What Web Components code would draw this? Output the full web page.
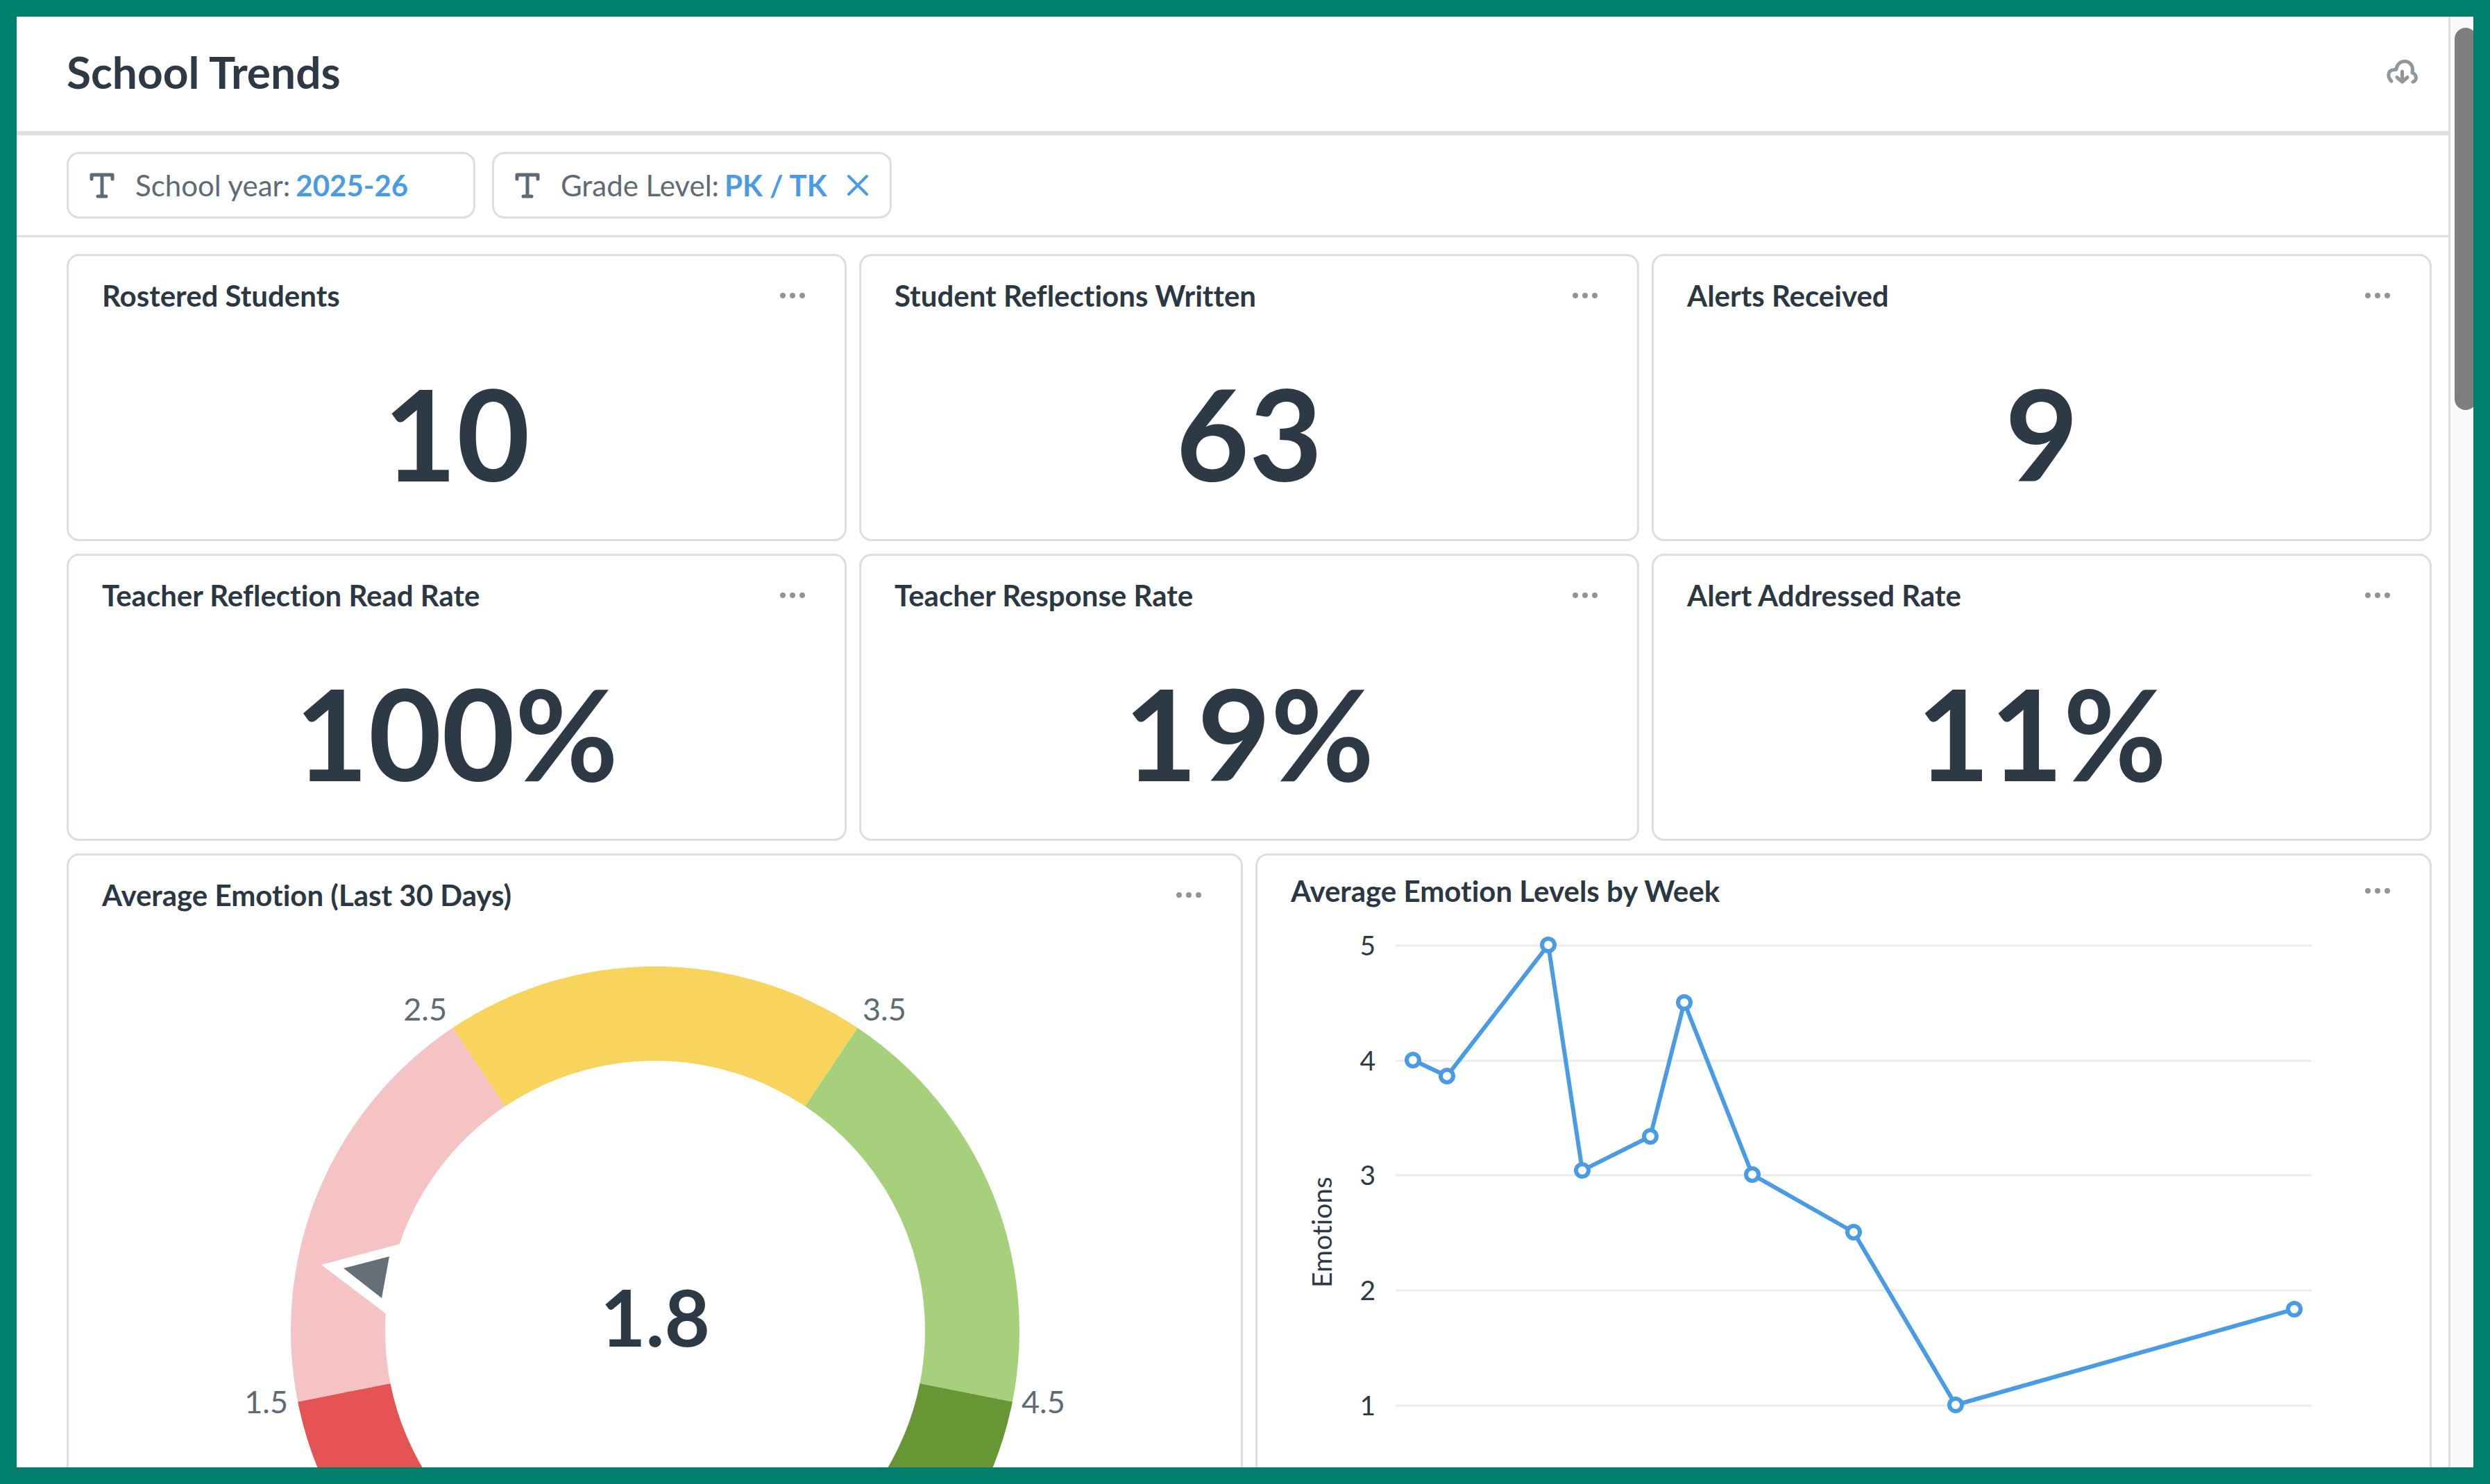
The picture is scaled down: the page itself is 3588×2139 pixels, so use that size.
<!DOCTYPE html>
<html lang="en">
<head>
<meta charset="utf-8">
<title>School Trends</title>
<style>
  body { margin: 0; font-family: Lato, "Liberation Sans", sans-serif; font-variant-ligatures: none; color: #2d3a45; background: #fff; }
</style>
</head>
<body>
<dashboard-frame>
  <dashboard-header slot="header" heading="School Trends"></dashboard-header>
  <filter-bar slot="filters">
    <filter-chip label="School year:" value="2025-26"></filter-chip>
    <filter-chip label="Grade Level:" value="PK / TK" clearable></filter-chip>
  </filter-bar>
  <card-grid columns="3">
    <dash-card heading="Rostered Students"><stat-number>10</stat-number></dash-card>
    <dash-card heading="Student Reflections Written"><stat-number>63</stat-number></dash-card>
    <dash-card heading="Alerts Received"><stat-number>9</stat-number></dash-card>
    <dash-card heading="Teacher Reflection Read Rate"><stat-number>100%</stat-number></dash-card>
    <dash-card heading="Teacher Response Rate"><stat-number>19%</stat-number></dash-card>
    <dash-card heading="Alert Addressed Rate"><stat-number>11%</stat-number></dash-card>
  </card-grid>
  <card-grid columns="2">
    <dash-card heading="Average Emotion (Last 30 Days)"><gauge-chart></gauge-chart></dash-card>
    <dash-card heading="Average Emotion Levels by Week" compact><line-chart></line-chart></dash-card>
  </card-grid>
</dashboard-frame>

<script>
const define = (name, html, setup) => {
  const template = document.createElement('template');
  template.innerHTML = html;
  customElements.define(name, class extends HTMLElement {
    connectedCallback() {
      if (this.shadowRoot) return;
      const root = this.attachShadow({ mode: 'open' });
      root.append(template.content.cloneNode(true));
      if (setup) setup(this, root);
    }
  });
};

define('dashboard-frame', `
  <style>
    :host { display: block; position: relative; box-sizing: border-box; height: 100vh; border: 24px solid #00806c; overflow: hidden; background: #fff; }
    .cards { display: flex; flex-direction: column; gap: 18px; padding: 24px 60px 24px 72px; }
    .track { position: absolute; top: 0; right: 0; bottom: 0; width: 33px; border-left: 3px solid #dcdedf; background: rgba(249, 249, 249, .88); overflow: hidden; }
    .thumb { width: 32px; height: 551px; margin: 16px 0 0 6px; border-radius: 16px; background: rgba(122, 122, 122, .97); }
  </style>
  <slot name="header"></slot>
  <slot name="filters"></slot>
  <main class="cards"><slot></slot></main>
  <div class="track" aria-hidden="true"><div class="thumb"></div></div>
`);

define('dashboard-header', `
  <style>
    :host { display: flex; align-items: center; justify-content: space-between; box-sizing: border-box; height: 171px; padding: 0 76px 6px 72px; border-bottom: 6px solid #dcdedf; }
    h1 { margin: 0; font-size: 64px; line-height: 78px; font-weight: 700; }
    button { display: block; padding: 0; border: 0; background: none; color: #8f979c; }
    svg { display: block; }
  </style>
  <h1></h1>
  <button type="button" aria-label="Download">
    <svg width="52" height="42" viewBox="0 0 52 42" fill="none" stroke="currentColor" stroke-width="5" stroke-linecap="round" stroke-linejoin="round">
      <path d="M10 34C4 28 4 18 14 17.500L17 17C18 9 23 5.500 29 5.500C37 5.500 42 12 40 22C46 24 48 32 41 35"/>
      <path d="M25.500 20V34M18 28.500L25.500 35L33 28.500"/>
    </svg>
  </button>
`, (el, root) => { root.querySelector('h1').textContent = el.getAttribute('heading'); });

define('filter-bar', `
  <style>
    :host { display: flex; gap: 24px; padding: 24px 72px; border-bottom: 3px solid #dcdedf; }
  </style>
  <slot></slot>
`);

define('filter-chip', `
  <style>
    :host { display: block; }
    .chip { display: flex; align-items: center; box-sizing: border-box; height: 96px; min-width: 589px; padding: 0 30px; border: 3px solid #dcdfdf; border-radius: 18px; font-size: 42px; line-height: 54px; color: #5f6b74; white-space: nowrap; }
    :host([clearable]) .chip { min-width: 0; }
    .label { display: flex; align-items: center; padding: 0; border: 0; background: none; font: inherit; color: inherit; }
    .type { display: block; margin-right: 30px; }
    strong { margin-left: 8px; font-weight: 700; color: #4a9be6; }
    .clear { display: none; margin-left: 28px; padding: 0; border: 0; background: none; color: #4a9be6; }
    :host([clearable]) .clear { display: block; }
    .clear svg { display: block; }
  </style>
  <div class="chip">
    <button class="label" type="button">
      <svg class="type" width="36" height="38" viewBox="0 0 36 38" fill="none" stroke="currentColor" stroke-width="5" stroke-linejoin="round" stroke-linecap="round">
        <path d="M3 10V4H33V10M18 4V35M12 35H24"/>
      </svg>
      <span></span><strong></strong>
    </button>
    <button class="clear" type="button" aria-label="Clear filter">
      <svg width="32" height="32" viewBox="0 0 32 32" stroke="currentColor" stroke-width="4" stroke-linecap="round"><path d="M3 3L29 29M29 3L3 29"/></svg>
    </button>
  </div>
`, (el, root) => {
  root.querySelector('span').textContent = el.getAttribute('label');
  root.querySelector('strong').textContent = el.getAttribute('value');
});

define('card-grid', `
  <style>
    :host { display: grid; gap: 18px; }
    :host([columns="3"]) { grid-template-columns: repeat(3, minmax(0, 1fr)); grid-auto-rows: 414px; }
    :host([columns="2"]) { grid-template-columns: repeat(2, minmax(0, 1fr)); }
  </style>
  <slot></slot>
`);

define('dash-card', `
  <style>
    :host { display: flex; flex-direction: column; box-sizing: border-box; border: 3px solid #dcdfdf; border-radius: 18px; padding-top: 30px; background: #fff; }
    :host([compact]) { padding-top: 24px; }
    header { display: flex; align-items: center; justify-content: space-between; padding: 0 54px 0 48px; }
    h2 { margin: 0; font-size: 42px; line-height: 54px; font-weight: 700; color: #2b3843; white-space: nowrap; }
    button { display: block; padding: 0; border: 0; background: none; color: #8f979c; }
    svg { display: block; }
    .body { flex: 1; display: flex; flex-direction: column; }
  </style>
  <header>
    <h2></h2>
    <button type="button" aria-label="More options">
      <svg width="42" height="12" viewBox="0 0 42 12" fill="currentColor"><circle cx="7" cy="6" r="4"/><circle cx="21" cy="6" r="4"/><circle cx="35" cy="6" r="4"/></svg>
    </button>
  </header>
  <div class="body"><slot></slot></div>
`, (el, root) => { root.querySelector('h2').textContent = el.getAttribute('heading'); });

define('stat-number', `
  <style>
    :host { display: flex; flex: 1; align-items: center; justify-content: center; padding-top: 18px; font-size: 182px; line-height: 220px; font-weight: 700; }
  </style>
  <slot></slot>
`);

define('gauge-chart', `
  <style>
    :host { display: block; }
    svg { display: block; width: 100%; height: auto; }
    text { font-size: 45px; fill: #5f6b74; }
    .value { font-size: 113px; font-weight: 700; fill: #2d3a45; text-anchor: middle; }
    .end { text-anchor: end; }
  </style>
  <svg viewBox="0 0 1689 1080" role="img" aria-label="Average emotion gauge">
    <g class="arcs"></g>
    <path d="M364 506L500 470V591H476Z" fill="#fff"/>
    <path d="M396 511L462 494L451 554Z" fill="#656f78"/>
    <text class="value" x="845" y="624">1.8</text>
    <text class="end" x="316" y="720">1.5</text>
    <text class="end" x="545" y="154">2.5</text>
    <text x="1144" y="154">3.5</text>
    <text x="1373" y="720">4.5</text>
  </svg>
`, (el, root) => {
  // The scale 1..5 sweeps 270 degrees, with 3 at the top.
  const cx = 845, cy = 601, outer = 525, inner = 389;
  const point = (value, r) => {
    const a = (value - 3) * 67.5 * Math.PI / 180;
    return (cx + r * Math.sin(a)).toFixed(1) + ' ' + (cy - r * Math.cos(a)).toFixed(1);
  };
  const bands = [[1, 1.5, '#e65355'], [1.5, 2.5, '#f6c3c4'], [2.5, 3.5, '#f9d45c'], [3.5, 4.5, '#a6d07c'], [4.5, 5, '#689635']];
  root.querySelector('.arcs').innerHTML = bands.map(([from, to, fill]) =>
    `<path fill="${fill}" d="M${point(from, outer)}A${outer} ${outer} 0 0 1 ${point(to, outer)}L${point(to, inner)}A${inner} ${inner} 0 0 0 ${point(from, inner)}Z"/>`).join('');
});

define('line-chart', `
  <style>
    :host { display: block; }
    svg { display: block; width: 100%; height: auto; }
    text { font-size: 39px; fill: #2d3a45; text-anchor: end; }
    .axis { text-anchor: middle; }
    .grid { stroke: #ececec; stroke-width: 3; }
    .series { fill: none; stroke: #4a9be6; stroke-width: 6; stroke-linejoin: round; }
    circle { fill: #fff; stroke: #4a9be6; stroke-width: 6; }
  </style>
  <svg viewBox="0 0 1689 1080" role="img" aria-label="Average emotion levels by week">
    <text class="axis" transform="translate(107 465) rotate(-90)">Emotions</text>
    <g class="plot"></g>
  </svg>
`, (el, root) => {
  const data = [[0, 4], [1, 3.86], [4, 5], [5, 3.04], [7, 3.335], [8, 4.5], [10, 3], [13, 2.5], [16, 1], [26, 1.835]];
  const y = value => Math.round(714 - (value - 1) * 165.8);
  const points = data.map(([week, value]) => [Math.round(224 + week * 48.86), y(value)]);
  const rows = [5, 4, 3, 2, 1].map(level =>
    `<path class="grid" d="M199 ${y(level) + 1}H1519"/><text x="170" y="${y(level) + 15}">${level}</text>`).join('');
  root.querySelector('.plot').innerHTML = rows +
    `<polyline class="series" points="${points.join(' ')}"/>` +
    points.map(([px, py]) => `<circle cx="${px}" cy="${py}" r="9"/>`).join('');
});
</script>
</body>
</html>
